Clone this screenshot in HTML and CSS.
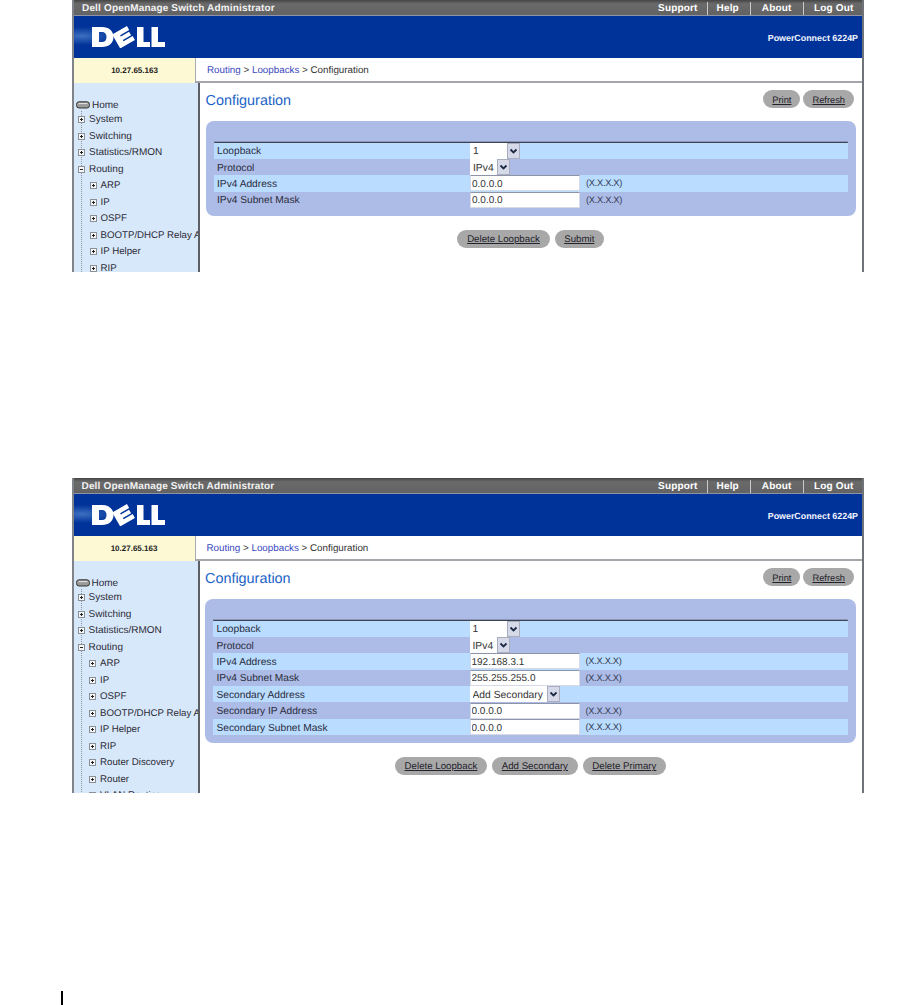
FILE: index.html
```html
<!DOCTYPE html>
<html lang="en">
<head>
<meta charset="utf-8">
<title>Loopback Configuration</title>
<link rel="stylesheet" href="styles.css">
</head>
<body>
<svg class="defs" aria-hidden="true">
  <symbol id="plus" viewBox="0 0 7 7"><rect x=".5" y=".5" width="6" height="6" fill="#f4f6f8" stroke="#8b8f96"/><path d="M2 3.5h3M3.5 2v3" stroke="#222" fill="none"/></symbol>
  <symbol id="minus" viewBox="0 0 7 7"><rect x=".5" y=".5" width="6" height="6" fill="#f4f6f8" stroke="#8b8f96"/><path d="M2 3.5h3" stroke="#222" fill="none"/></symbol>
  <symbol id="chev" viewBox="0 0 11 14"><path d="M2.500 5.500l3 3 3-3" stroke="#1d2a44" stroke-width="1.800" fill="none"/></symbol>
  <symbol id="disk" viewBox="0 0 14 8"><rect x=".5" y=".8" width="13" height="6.2" rx="2.6" fill="#9a9a9a" stroke="#333"/><path d="M2.5 2.6h9" stroke="#e4e4e4"/></symbol>
  <symbol id="dell" viewBox="0 0 73 22">
    <path fill-rule="evenodd" d="M0 1H10C17 1 21.500 5 21.500 11C21.500 17 17 21 10 21H0ZM7 6V16H10C13 16 14.500 14 14.500 11C14.500 8 13 6 10 6Z"/>
    <path transform="rotate(-30 32 11)" d="M23 3H40V7.500H29.500V9H39V13H29.500V14.500H40V19H23Z"/>
    <path d="M45 1H51.500V16H58V21H45Z"/>
    <path d="M59.500 1H66V16H73V21H59.500Z"/>
  </symbol>
</svg>

<section class="shot shot-a">
  <header class="titlebar">
    <span class="app-name">Dell OpenManage Switch Administrator</span>
    <nav class="top-links">
      <a class="top-link">Support</a><a class="top-link">Help</a><a class="top-link">About</a><a class="top-link">Log Out</a>
    </nav>
  </header>
  <div class="brand">
    <svg class="logo" role="img" aria-label="Dell"><use href="#dell"/></svg>
    <span class="model">PowerConnect 6224P</span>
  </div>
  <div class="crumbrow">
    <div class="ip">10.27.65.163</div>
    <div class="crumbs"><a>Routing</a> &gt; <a>Loopbacks</a> &gt; Configuration</div>
  </div>
  <div class="body-row">
    <aside class="side">
      <ul class="tree">
        <li class="home"><svg class="disk"><use href="#disk"/></svg>Home</li>
        <li class="node"><svg class="box"><use href="#plus"/></svg>System</li>
        <li class="node"><svg class="box"><use href="#plus"/></svg>Switching</li>
        <li class="node"><svg class="box"><use href="#plus"/></svg>Statistics/RMON</li>
        <li class="node"><svg class="box"><use href="#minus"/></svg>Routing</li>
        <li class="node sub"><svg class="box"><use href="#plus"/></svg>ARP</li>
        <li class="node sub"><svg class="box"><use href="#plus"/></svg>IP</li>
        <li class="node sub"><svg class="box"><use href="#plus"/></svg>OSPF</li>
        <li class="node sub"><svg class="box"><use href="#plus"/></svg>BOOTP/DHCP Relay Agent</li>
        <li class="node sub"><svg class="box"><use href="#plus"/></svg>IP Helper</li>
        <li class="node sub"><svg class="box"><use href="#plus"/></svg>RIP</li>
      </ul>
    </aside>
    <main class="content">
      <div class="head">
        <h1 class="title">Configuration</h1>
        <div class="btns"><a class="btn">Print</a><a class="btn">Refresh</a></div>
      </div>
      <div class="panel">
        <div class="row"><span class="lbl">Loopback</span><span class="sel"><select class="w-num"><option>1</option></select><span class="arrow"><svg class="chev"><use href="#chev"/></svg></span></span></div>
        <div class="row"><span class="lbl">Protocol</span><span class="sel"><select class="w-proto"><option>IPv4</option></select><span class="arrow"><svg class="chev"><use href="#chev"/></svg></span></span></div>
        <div class="row"><span class="lbl">IPv4 Address</span><input class="field" value="0.0.0.0"><span class="hint">(X.X.X.X)</span></div>
        <div class="row"><span class="lbl">IPv4 Subnet Mask</span><input class="field" value="0.0.0.0"><span class="hint">(X.X.X.X)</span></div>
      </div>
      <div class="actions"><a class="btn">Delete Loopback</a><a class="btn">Submit</a></div>
    </main>
  </div>
</section>

<section class="shot shot-b">
  <header class="titlebar">
    <span class="app-name">Dell OpenManage Switch Administrator</span>
    <nav class="top-links">
      <a class="top-link">Support</a><a class="top-link">Help</a><a class="top-link">About</a><a class="top-link">Log Out</a>
    </nav>
  </header>
  <div class="brand">
    <svg class="logo" role="img" aria-label="Dell"><use href="#dell"/></svg>
    <span class="model">PowerConnect 6224P</span>
  </div>
  <div class="crumbrow">
    <div class="ip">10.27.65.163</div>
    <div class="crumbs"><a>Routing</a> &gt; <a>Loopbacks</a> &gt; Configuration</div>
  </div>
  <div class="body-row">
    <aside class="side">
      <ul class="tree">
        <li class="home"><svg class="disk"><use href="#disk"/></svg>Home</li>
        <li class="node"><svg class="box"><use href="#plus"/></svg>System</li>
        <li class="node"><svg class="box"><use href="#plus"/></svg>Switching</li>
        <li class="node"><svg class="box"><use href="#plus"/></svg>Statistics/RMON</li>
        <li class="node"><svg class="box"><use href="#minus"/></svg>Routing</li>
        <li class="node sub"><svg class="box"><use href="#plus"/></svg>ARP</li>
        <li class="node sub"><svg class="box"><use href="#plus"/></svg>IP</li>
        <li class="node sub"><svg class="box"><use href="#plus"/></svg>OSPF</li>
        <li class="node sub"><svg class="box"><use href="#plus"/></svg>BOOTP/DHCP Relay Agent</li>
        <li class="node sub"><svg class="box"><use href="#plus"/></svg>IP Helper</li>
        <li class="node sub"><svg class="box"><use href="#plus"/></svg>RIP</li>
        <li class="node sub"><svg class="box"><use href="#plus"/></svg>Router Discovery</li>
        <li class="node sub"><svg class="box"><use href="#plus"/></svg>Router</li>
        <li class="node sub"><svg class="box"><use href="#plus"/></svg>VLAN Routing</li>
      </ul>
    </aside>
    <main class="content">
      <div class="head">
        <h1 class="title">Configuration</h1>
        <div class="btns"><a class="btn">Print</a><a class="btn">Refresh</a></div>
      </div>
      <div class="panel">
        <div class="row"><span class="lbl">Loopback</span><span class="sel"><select class="w-num"><option>1</option></select><span class="arrow"><svg class="chev"><use href="#chev"/></svg></span></span></div>
        <div class="row"><span class="lbl">Protocol</span><span class="sel"><select class="w-proto"><option>IPv4</option></select><span class="arrow"><svg class="chev"><use href="#chev"/></svg></span></span></div>
        <div class="row"><span class="lbl">IPv4 Address</span><input class="field" value="192.168.3.1"><span class="hint">(X.X.X.X)</span></div>
        <div class="row"><span class="lbl">IPv4 Subnet Mask</span><input class="field" value="255.255.255.0"><span class="hint">(X.X.X.X)</span></div>
        <div class="row"><span class="lbl">Secondary Address</span><span class="sel"><select class="w-add"><option>Add Secondary</option></select><span class="arrow"><svg class="chev"><use href="#chev"/></svg></span></span></div>
        <div class="row"><span class="lbl">Secondary IP Address</span><input class="field" value="0.0.0.0"><span class="hint">(X.X.X.X)</span></div>
        <div class="row"><span class="lbl">Secondary Subnet Mask</span><input class="field" value="0.0.0.0"><span class="hint">(X.X.X.X)</span></div>
      </div>
      <div class="actions"><a class="btn">Delete Loopback</a><a class="btn">Add Secondary</a><a class="btn">Delete Primary</a></div>
    </main>
  </div>
</section>

<div class="change-bar"></div>
</body>
</html>
```
FILE: styles.css
```css
* { box-sizing: border-box; }
html, body { margin: 0; padding: 0; background: #fff; }
body {
  height: 1005px;
  overflow: hidden;
  font-family: "Liberation Sans", Arial, sans-serif;
  font-size: 10px;
  color: #2a2a33;
  text-rendering: geometricPrecision;
}
.defs { display: none; }

.shot {
  display: flex;
  flex-direction: column;
  overflow: hidden;
  border-left: 2px solid #80838a;
  border-right: 2px solid #70737a;
}
.shot-a { margin-left: 72px; width: 792px; height: 272px; }
.shot-b { margin: 206px 0 0 71.500px; width: 792.500px; height: 315px; }

/* title bar */
.titlebar {
  flex: none;
  display: flex;
  justify-content: space-between;
  align-items: center;
  height: 16px;
  padding: 2px 0 0 8px;
  background: linear-gradient(#454545, #6a6a6a 25%, #636363);
  border-bottom: 1px solid #8d94a8;
  color: #fff;
  font-weight: bold;
}
.app-name { font-size: 10px; letter-spacing: .165px; color: #f2f2f2; }
.top-links { display: flex; height: 12px; align-items: center; }
.top-link {
  padding: 0 11px;
  font-size: 10px;
  letter-spacing: .16px;
  line-height: 13px;
  border-left: 1px solid #c9c9c9;
}
.top-link:first-child { border-left: 0; padding-right: 9px; }
.top-link:nth-child(2) { padding-left: 9px; }
.top-link:last-child { padding: 0 8.500px 0 10.500px; }

/* brand band */
.brand {
  flex: none;
  display: flex;
  justify-content: space-between;
  align-items: center;
  height: 42px;
  padding: 0 4px 0 18px;
  background:
    radial-gradient(ellipse 34px 9px at 8px 20px, rgba(110, 160, 225, .55), rgba(0, 51, 153, 0)),
    #003399;
}
.logo { width: 73px; height: 22px; fill: #fff; }
.model { margin-top: 2px; font-size: 8.900px; font-weight: bold; color: #f0f4ff; }

/* breadcrumb row */
.crumbrow { flex: none; display: flex; height: 25px; }
.ip {
  flex: none;
  width: 121px;
  display: flex;
  align-items: center;
  justify-content: center;
  background: #fdf9d4;
  font-size: 8px;
  font-weight: bold;
  color: #222;
}
.crumbs {
  flex: 1;
  padding: 6px 0 0 11px;
  font-size: 9.800px;
  line-height: 13px;
  color: #333;
  border-left: 1px solid #a9abb0;
  border-bottom: 2px solid #a4a6ab;
}
.crumbs a { color: #3a49c0; }

/* body */
.body-row { flex: 1; display: flex; min-height: 0; }
.side {
  flex: none;
  width: 126px;
  overflow: hidden;
  background: #d8e8fb;
  border-right: 2px solid #5c5f66;
}
.tree {
  list-style: none;
  margin: 0;
  padding: 16px 0 0;
  background-image: repeating-linear-gradient(#8f959c 0 1px, rgba(0, 0, 0, 0) 1px 2px);
  background-repeat: no-repeat;
  background-size: 1px 100%;
  background-position: 7px 28px;
  font-size: 10px;
  color: #2c2c35;
}
.tree li { display: flex; align-items: center; white-space: nowrap; }
.home { height: 12.500px; padding-left: 2px; gap: 2px; }
.disk { flex: none; width: 14px; height: 8px; }
.node { height: 16.500px; padding-left: 4px; gap: 4px; }
.node.sub { padding-left: 15.500px; font-size: 9.700px; }
.box { flex: none; width: 7px; height: 7px; }

.content { flex: 1; min-width: 0; padding: 7px 6px 0 5.500px; }
.head {
  display: flex;
  justify-content: space-between;
  align-items: center;
  height: 18px;
  padding-right: 2px;
}
.title {
  margin: 0;
  font-size: 14.400px;
  font-weight: normal;
  color: #1a63c7;
  line-height: 20px;
  padding-top: 4px;
}
.btns { display: flex; gap: 3px; }
.btn {
  display: block;
  height: 18px;
  padding: 0 9.700px;
  border-radius: 9px;
  background: #a8a8a8;
  color: #22222a;
  font-size: 9.700px;
  line-height: 20px;
  text-decoration: underline;
}
.btns .btn { padding: 0 9px; font-size: 9.300px; }

.panel {
  margin-top: 12.500px;
  padding: 22px 8px 7.500px;
  border-radius: 8px;
  background: #adbce6;
}
.row {
  display: flex;
  align-items: center;
  height: 16.400px;
  padding-left: 3.500px;
  font-size: 10.200px;
}
.panel .row:first-child { box-shadow: 0 -1.500px 0 -0.200px #3f4454; }
.row:nth-child(odd) { background: #b9dcff; }
.lbl { flex: none; width: 253px; padding-top: 2px; color: #2a2c3c; }
.field {
  flex: none;
  width: 110px;
  height: 16px;
  padding: 2px 0 0 1px;
  border: 1px solid #d6dae6;
  border-top-color: #8f95a8;
  background: #fff;
  font: 10px "Liberation Sans", Arial, sans-serif;
  color: #333;
  text-rendering: geometricPrecision;
}
.hint { margin-left: 6px; font-size: 9.300px; letter-spacing: -.3px; color: #333a55; }
.sel { display: flex; height: 16px; }
.sel select {
  appearance: none;
  -webkit-appearance: none;
  height: 16px;
  padding: 2px 0 0 3px;
  border: 0;
  border-radius: 0;
  background: #fff;
  font: 10.300px "Liberation Sans", Arial, sans-serif;
  color: #333;
  text-rendering: geometricPrecision;
}
.w-num { width: 37px; }
.w-proto { width: 27px; }
.w-add { width: 77px; }
.arrow {
  flex: none;
  width: 13px;
  height: 16px;
  background: #d6d9e8;
  border: 1px solid #a8adc0;
}
.chev { display: block; width: 11px; height: 14px; }

.actions {
  display: flex;
  justify-content: center;
  gap: 5px;
  margin-top: 14.500px;
}

.change-bar {
  width: 2px;
  height: 14px;
  margin: 198px 0 0 61px;
  background: #000;
}
```
